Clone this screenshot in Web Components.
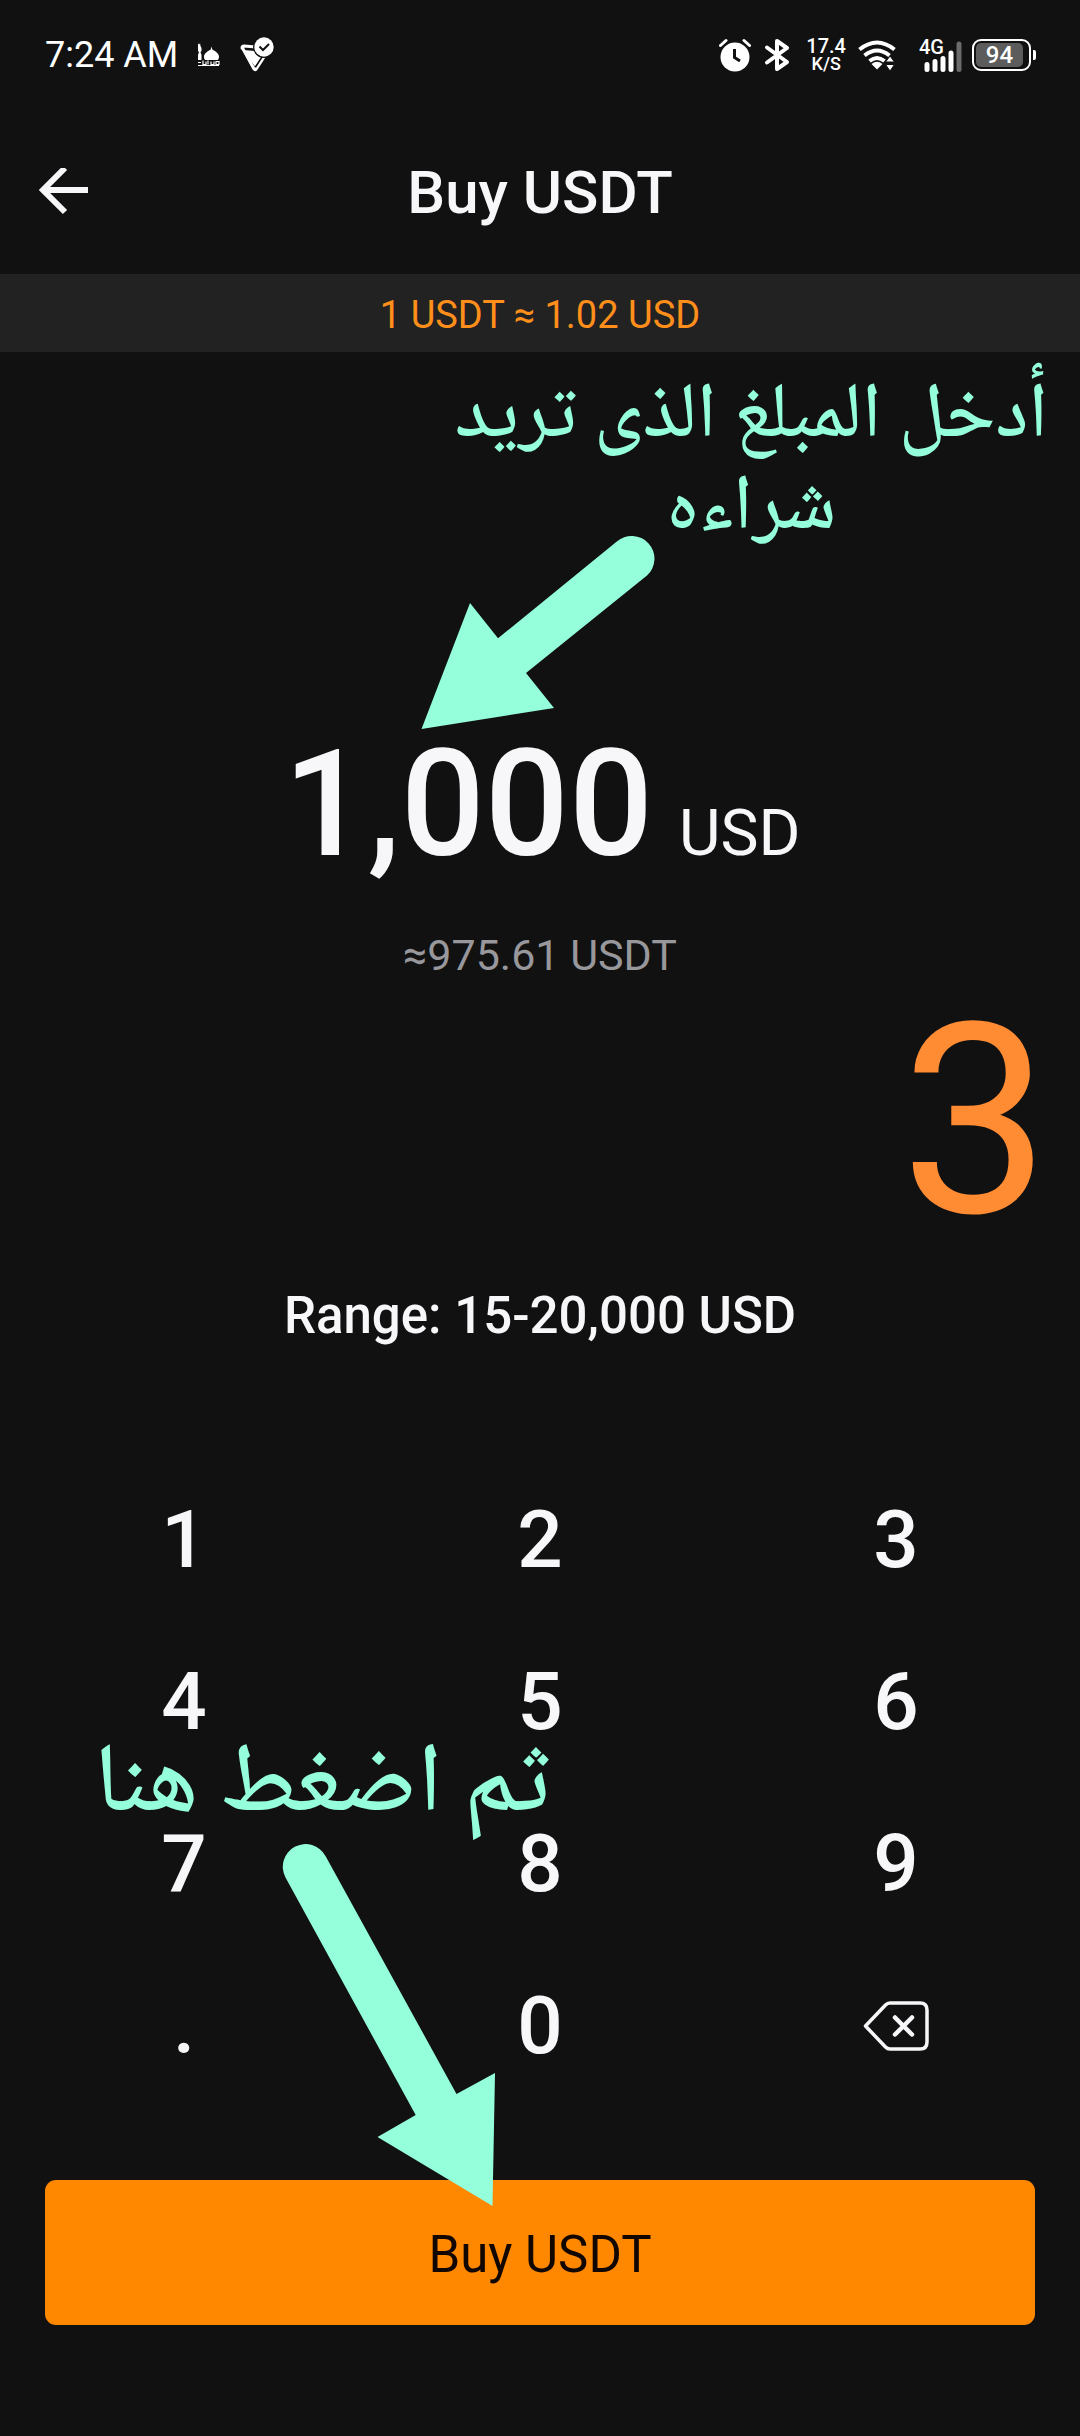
<!DOCTYPE html>
<html lang="en">
<head>
<meta charset="utf-8">
<meta name="viewport" content="width=device-width">
<title>Buy USDT</title>
<style>
  html { background: #111111; }
  body { margin: 0; background: #111111; }
</style>
</head>
<body>
<buy-screen></buy-screen>

<script>
function define(name, html) {
  const template = document.createElement('template');
  template.innerHTML = html;
  customElements.define(name, class extends HTMLElement {
    constructor() {
      super();
      this.attachShadow({ mode: 'open' }).append(template.content.cloneNode(true));
    }
  });
}

define('status-bar', `
  <style>
    :host { display: flex; justify-content: space-between; align-items: center; height: 110px; padding: 0 44px 0 45px; box-sizing: border-box; color: #fff; }
    .group { display: flex; align-items: center; }
    .time { font-size: 36px; line-height: 44px; }
    svg { display: block; flex: none; }
    .left svg:nth-of-type(1) { margin-left: 19px; }
    .left svg:nth-of-type(2) { margin-left: 18px; }
    .speed { display: flex; flex-direction: column; align-items: center; margin: 0 12px 0 16px; font-weight: 500; }
    .speed b { font-weight: 500; font-size: 20px; line-height: 18px; }
    .speed span { font-size: 18px; line-height: 18px; }
    .battery { display: flex; align-items: center; margin-left: 9px; }
    .cell { display: flex; box-sizing: border-box; width: 59px; height: 32px; padding: 2px; border: 2px solid #fff; border-radius: 9px; }
    .level { flex: 1; margin-right: 4px; border-radius: 5px; background: #5c5c5c; font-size: 24px; line-height: 25px; font-weight: 500; text-align: center; }
    .nub { width: 3px; height: 10px; margin-left: 2px; border-radius: 0 2px 2px 0; background: #fff; }
  </style>
  <div class="group left">
    <span class="time">7:24 AM</span>
    <svg width="24" height="24" viewBox="0 0 24 24" fill="#fff" aria-hidden="true">
      <path d="M1 .5l1.500 1L3 0l.5 3 1 2v3l-1 1 1 3v5H1v-5l1-3-1-1V5z"/>
      <path d="M14.500 3.500l.8 3c3.500 2 6.700 4 6.700 7.200 0 1.600-.6 2.600-1.200 3.300H8.200C7.500 16.300 7 15.300 7 13.700 7 10.500 10.300 8.500 13.700 6.500z"/>
      <path d="M1 19.500h3m2-2v4h3v-3m2 3v-4m3 1v3h3v-3m2 0h3v3h-3zM1 22.500h21" fill="none" stroke="#fff" stroke-width="1.200"/>
    </svg>
    <svg width="36" height="36" viewBox="0 0 36 36" fill="none" aria-hidden="true">
      <path d="M3.500 11L15 32q1 1.500 2.200 0L26 18.500" stroke="#fff" stroke-width="3" stroke-linejoin="round" stroke-linecap="round"/>
      <path d="M3 11q0-2 2-2L17 10" stroke="#fff" stroke-width="3" stroke-linecap="round"/>
      <path d="M4 13l12 1 8 4.500-8 11z" fill="#fff"/>
      <path d="M16.500 30l7.500-11.500" stroke="#111" stroke-width="1.500"/>
      <circle cx="25" cy="10" r="11" fill="#111"/><circle cx="25" cy="10" r="9.700" fill="#fff"/>
      <path d="M20.500 9.500l3.500 3.500 6-6" stroke="#111" stroke-width="2"/>
    </svg>
  </div>
  <div class="group">
    <svg width="32" height="34" viewBox="0 0 32 34" fill="none" aria-hidden="true">
      <circle cx="16" cy="19" r="14.500" fill="#fff"/>
      <path d="M1.500 7.500L7 2.500M30.500 7.500L25 2.500" stroke="#fff" stroke-width="3" stroke-linecap="round"/>
      <path d="M15.500 11v8.500l5.500 3.500" stroke="#111" stroke-width="3"/>
    </svg>
    <svg width="26" height="34" viewBox="0 0 26 34" fill="none" stroke="#fff" stroke-width="4" stroke-linejoin="round" stroke-linecap="round" style="margin-left:13px" aria-hidden="true">
      <path d="M3 9.500L23 24l-10 7V3l10 7L3 24.500"/>
    </svg>
    <div class="speed"><b>17.4</b><span>K/S</span></div>
    <svg width="38" height="32" viewBox="0 0 38 32" fill="none" stroke="#fff" stroke-width="4" aria-hidden="true">
      <path d="M1.500 10.500Q19-3.500 36.500 10.500M6.500 16.500Q19 6.500 31.500 16.500M11.500 22Q19 16 26.500 22"/>
      <path d="M13.500 25q5.500-4.500 11 0L19 30.500z" fill="#fff" stroke="none"/>
      <path d="M32 17l4.500 6h-9zM32 32l4.500-6.500h-9z" fill="#fff" stroke="#111" stroke-width="1"/>
    </svg>
    <svg width="44" height="46" viewBox="0 -6 44 46" style="margin-left:23px" role="img" aria-label="4G">
      <text x="0" y="16" fill="#fff" font-size="20" font-weight="500">4G</text>
      <path d="M8 26.500v5M16 23.500v8M24 20.500v11M32 15v16.500" stroke="#fff" stroke-width="5" stroke-linecap="round"/>
      <path d="M40 6v25.500" stroke="#6b6b6b" stroke-width="5" stroke-linecap="round"/>
    </svg>
    <div class="battery"><div class="cell"><div class="level">94</div></div><div class="nub"></div></div>
  </div>
`);

define('app-header', `
  <style>
    :host { display: grid; grid-template-columns: 126px 1fr 126px; align-items: center; box-sizing: border-box; height: 164px; padding-top: 2px; }
    button { display: flex; justify-content: center; padding: 0; border: 0; background: none; color: #f7f7fa; height: 96px; align-items: center; }
    h1 { margin: 0; font-size: 60px; line-height: 72px; font-weight: 500; text-align: center; }
  </style>
  <button type="button" aria-label="Back">
    <svg width="50" height="50" viewBox="0 0 50 50" fill="none" stroke="currentColor" stroke-width="6" aria-hidden="true"><path d="M27 0L5 22l22 22M5 22h45"/></svg>
  </button>
  <h1><slot></slot></h1>
`);

define('rate-bar', `
  <style>
    :host { display: block; padding: 19px 0 15px; background: #222222; color: #ff8f1a; font-size: 38px; line-height: 44px; text-align: center; }
  </style>
  <slot></slot>
`);

define('amount-display', `
  <style>
    :host { display: flex; flex-direction: column; align-items: center; padding-top: 373px; }
    .amount { display: flex; align-items: baseline; gap: 26px; padding-left: 4px; line-height: 160px; }
    .value { font-size: 148px; font-weight: 500; }
    .unit { font-size: 64px; line-height: 72px; }
    .estimate { margin-top: 40px; font-size: 43px; line-height: 60px; color: #98979c; }
    .range { margin-top: 301px; font-size: 51px; line-height: 60px; font-weight: 500; }
  </style>
  <div class="amount"><output class="value"><slot name="value"></slot></output><span class="unit"><slot name="unit"></slot></span></div>
  <div class="estimate"><slot name="estimate"></slot></div>
  <div class="range"><slot name="range"></slot></div>
`);

define('key-button', `
  <style>
    :host { display: grid; }
    button { display: flex; align-items: center; justify-content: center; padding: 0; border: 0; background: none; color: inherit; font: 500 80px/80px Roboto, sans-serif; }
  </style>
  <button type="button"><slot></slot></button>
`);

define('key-pad', `
  <style>
    :host { display: grid; grid-template-columns: repeat(3, 1fr); grid-auto-rows: 162px; margin-top: 113px; padding: 0 6px; }
    svg { display: block; }
  </style>
  <key-button>1</key-button><key-button>2</key-button><key-button>3</key-button>
  <key-button>4</key-button><key-button>5</key-button><key-button>6</key-button>
  <key-button>7</key-button><key-button>8</key-button><key-button>9</key-button>
  <key-button>.</key-button><key-button>0</key-button>
  <key-button><svg width="66" height="50" viewBox="0 0 66 50" fill="none" stroke="currentColor" stroke-width="3.500" stroke-linejoin="round" role="img" aria-label="Delete">
    <path d="M2.500 25L22.500 4Q24.500 2 27 2H57q7 0 7 7v32q0 7-7 7H27q-2.500 0-4.500-2z"/>
    <path d="M32 16.500l17 17m0-17l-17 17" stroke-width="4.500" stroke-linecap="round"/>
  </svg></key-button>
`);

define('primary-button', `
  <style>
    :host { display: grid; margin: 73px 45px 111px; }
    button { height: 145px; padding: 4px 0 0; border: 0; border-radius: 11px; background: #ff8800; color: #110600; font: 400 51px/60px Roboto, sans-serif; }
  </style>
  <button type="button"><slot></slot></button>
`);

define('note-text', `
  <style>
    :host { position: absolute; z-index: 2; color: #94ffda; font-family: "Noto Naskh Arabic", "Noto Sans Arabic", "DejaVu Sans", sans-serif; text-align: center; white-space: nowrap; pointer-events: none; }
  </style>
  <slot></slot>
`);

define('note-arrows', `
  <style>
    :host { position: absolute; z-index: 1; top: 0; left: calc(50% - 540px); pointer-events: none; }
    svg { display: block; }
  </style>
  <svg width="1080" height="2436" viewBox="0 0 1080 2436" fill="#94ffda" aria-hidden="true">
    <path d="M421.500 729L470 603l28 35.300L616.500 541.800A22.700 22.700 0 0 1 647 575.500L526 673l28 35z"/>
    <path d="M492.500 2206L377.500 2137l38.200-22L285.500 1877.500A22.700 22.700 0 0 1 325.500 1856L456.500 2094l38.500-21z"/>
  </svg>
`);

define('buy-screen', `
  <style>
    :host { display: flex; flex-direction: column; position: relative; overflow: hidden; color: #f7f7fa; font-family: Roboto, "Noto Sans", sans-serif; }
    .first { top: 373px; right: 32px; font-size: 78px; line-height: 92px; font-weight: 500; }
    .second { top: 1734px; left: 94px; font-size: 98px; line-height: 110px; font-weight: 500; }
    .step { top: 965px; right: 30px; font-family: Roboto, sans-serif; font-size: 266px; line-height: 312px; color: #ff8b33; }
  </style>
  <status-bar></status-bar>
  <app-header>Buy USDT</app-header>
  <rate-bar>1 USDT ≈ 1.02 USD</rate-bar>
  <main>
    <amount-display>
      <span slot="value">1,000</span><span slot="unit">USD</span>
      <span slot="estimate">≈975.61 USDT</span>
      <span slot="range">Range: 15-20,000 USD</span>
    </amount-display>
    <key-pad></key-pad>
    <primary-button>Buy USDT</primary-button>
  </main>
  <note-arrows></note-arrows>
  <note-text class="first" dir="rtl" lang="ar">أدخل المبلغ الذى تريد<br>شراءه</note-text>
  <note-text class="second" dir="rtl" lang="ar">ثم اضغط هنا</note-text>
  <note-text class="step">3</note-text>
`);
</script>
</body>
</html>
